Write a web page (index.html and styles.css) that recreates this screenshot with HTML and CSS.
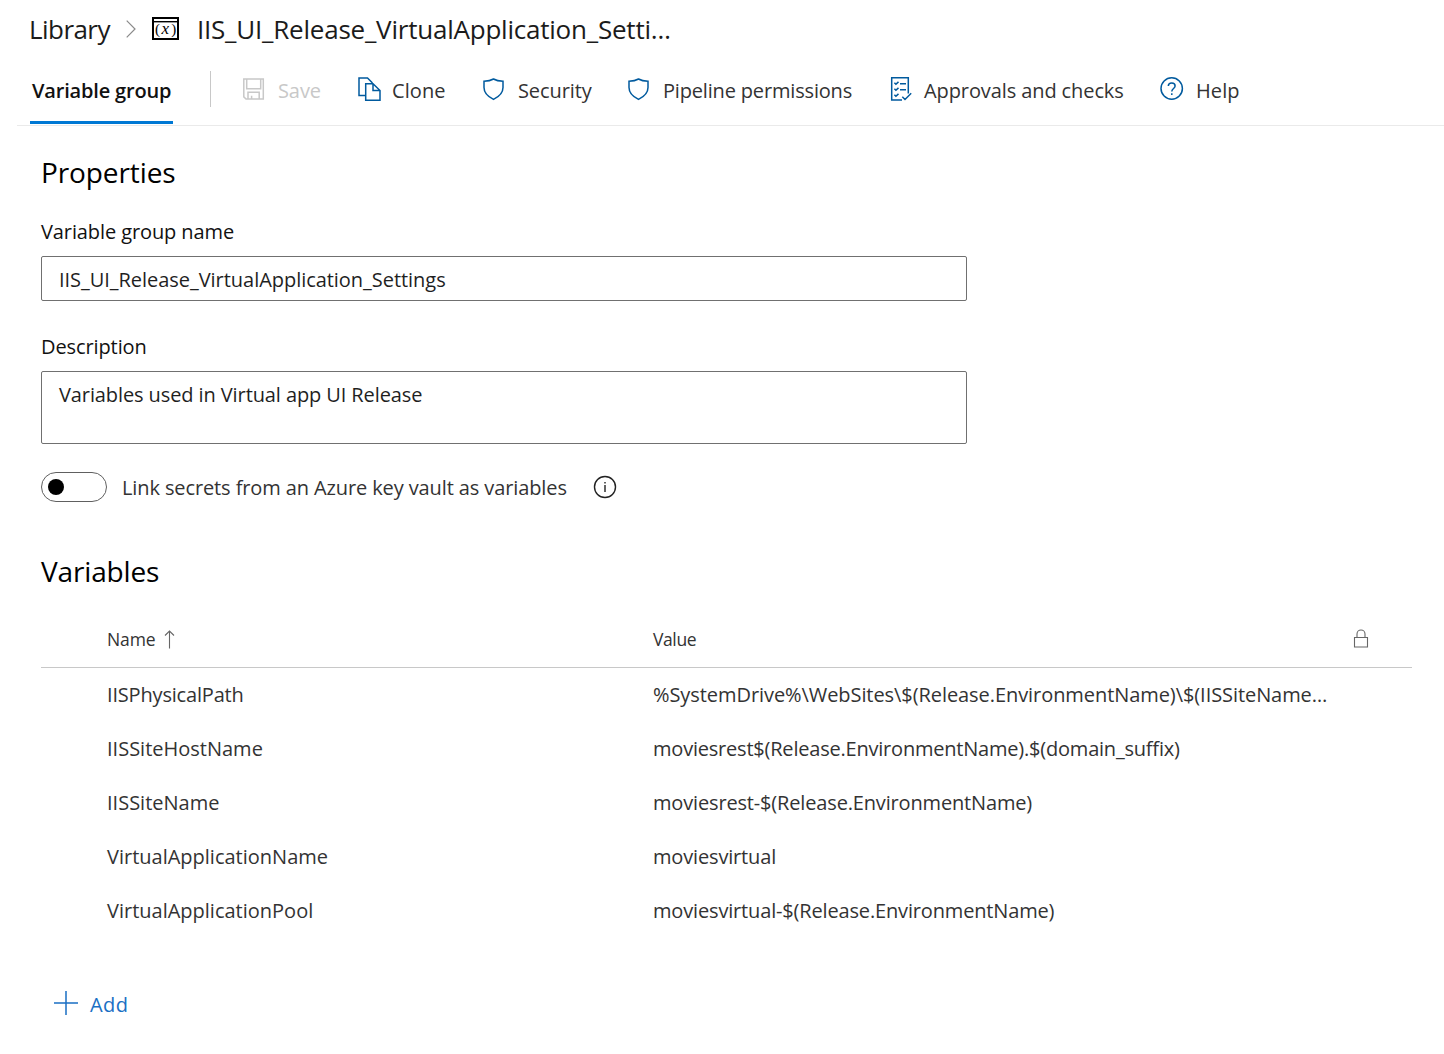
FILE: index.html
```html
<!DOCTYPE html>
<html lang="en">
<head>
<meta charset="utf-8">
<title>Library - Variable group</title>
<link rel="stylesheet" href="styles.css">
</head>
<body>
<header class="breadcrumb">
  <a class="crumb">Library</a>
  <svg class="chevron" width="10" height="18" viewBox="0 0 10 18"><path d="M.7.7 9 9 .7 17.3"/></svg>
  <svg class="group-icon" width="27" height="23" viewBox="0 0 27 23">
    <path d="M1 1h25v21H1z" stroke-width="2"/><path d="M1 4.7h25" stroke-width="1.4"/>
    <text x="3" y="16.500">(</text><text class="var" x="9.500" y="16.500">x</text><text x="19.200" y="16.500">)</text>
  </svg>
  <h1 class="title">IIS_UI_Release_VirtualApplication_Setti…</h1>
</header>

<nav class="toolbar">
  <a class="tab">Variable group</a>
  <span class="divider"></span>
  <a class="action disabled">
    <svg class="icon" viewBox="0 0 24 24"><path d="M1.8 1H21.3V21H4L1.8 18.9zM4.7 1v9.7h14V1M6 21v-6.7h11.2V21M9.6 21v-3.2"/></svg>
    <span>Save</span>
  </a>
  <a class="action clone">
    <svg class="icon" viewBox="0 0 24 24"><path d="M9.7 17.5H3V0h8.5l5 5M9.7 5.7H17l7 6.8v9.8H9.7zM17 5.7v6.8h7"/></svg>
    <span>Clone</span>
  </a>
  <a class="action">
    <svg class="icon" viewBox="0 0 24 24"><path d="M11.5 1C8.8 2.6 5.5 3.2 2 3.3V9.5C2 15 5.8 18.6 11.5 21.4 17.2 18.6 21 15 21 9.5V3.3C17.5 3.2 14.2 2.6 11.5 1z"/></svg>
    <span>Security</span>
  </a>
  <a class="action permissions">
    <svg class="icon" viewBox="0 0 24 24"><path d="M11.5 1C8.8 2.6 5.5 3.2 2 3.3V9.5C2 15 5.8 18.6 11.5 21.4 17.2 18.6 21 15 21 9.5V3.3C17.5 3.2 14.2 2.6 11.5 1z"/></svg>
    <span>Pipeline permissions</span>
  </a>
  <a class="action approvals">
    <svg class="icon" viewBox="0 0 24 24"><path d="M13 22H2.7V-.3H19.3V15.5M13.300 18.800l2.700 2.700 6.200-6.200M5.400 4.800l1.500 1.500L9.500 3.900M5.400 10.800l1.500 1.500 2.600-2.400M5.400 16.800l1.500 1.500 2.600-2.400M11 5.700h6M11 11.700h6"/></svg>
    <span>Approvals and checks</span>
  </a>
  <a class="action help">
    <svg class="icon" viewBox="0 0 24 24"><circle cx="11.7" cy="10.5" r="10.7"/><path d="M8.300 8C8.400 6 9.900 5 11.700 5c2 0 3.400 1.100 3.400 2.900 0 2.500-3.300 2.800-3.300 5.600M11.800 15.300v1.600"/></svg>
    <span>Help</span>
  </a>
</nav>

<main class="content">
  <h2 class="section">Properties</h2>
  <label class="label">Variable group name</label>
  <div class="field">IIS_UI_Release_VirtualApplication_Settings</div>
  <label class="label second">Description</label>
  <div class="field area">Variables used in Virtual app UI Release</div>
  <div class="toggle-row">
    <span class="toggle"><span class="knob"></span></span>
    <span class="toggle-label">Link secrets from an Azure key vault as variables</span>
    <svg class="info" width="24" height="24" viewBox="0 0 24 24"><circle cx="12" cy="12" r="10.5"/><path d="M12 10v7M12 7v1.5"/></svg>
  </div>

  <h2 class="section variables">Variables</h2>
  <section class="table">
    <div class="row head">
      <span class="name">Name
        <svg class="sort" width="11" height="19" viewBox="0 0 11 19"><path d="M5.5 18.5V1M1 5.5 5.5 1 10 5.5"/></svg>
      </span>
      <span class="head-value">Value</span>
      <svg class="lock" width="14" height="19" viewBox="0 0 14 19"><path d="M.5 8.5h13v9.500H.5zM3 8.500V5a4 4 0 0 1 8 0v3.500"/></svg>
    </div>
    <div class="row"><span class="name path">IISPhysicalPath</span><span class="long">%SystemDrive%\WebSites\$(Release.EnvironmentName)\$(IISSiteName…</span></div>
    <div class="row"><span class="name">IISSiteHostName</span><span class="value host">moviesrest$(Release.EnvironmentName).$(domain_suffix)</span></div>
    <div class="row"><span class="name">IISSiteName</span><span class="value">moviesrest-$(Release.EnvironmentName)</span></div>
    <div class="row"><span class="name">VirtualApplicationName</span><span class="value">moviesvirtual</span></div>
    <div class="row"><span class="name">VirtualApplicationPool</span><span class="value">moviesvirtual-$(Release.EnvironmentName)</span></div>
  </section>
  <a class="add">
    <svg class="plus" width="24" height="24" viewBox="0 0 24 24"><path d="M12 0v24M0 12h24"/></svg>
    <span>Add</span>
  </a>
</main>
</body>
</html>
```

FILE: styles.css
```css
* { box-sizing: border-box; }
body {
  margin: 0;
  background: #fff;
  color: #333;
  font: 20px/28px "Open Sans", sans-serif;
  white-space: nowrap;
}
h1, h2 { margin: 0; font-weight: 400; }
svg { display: block; flex: none; overflow: visible; fill: none; }

.breadcrumb {
  display: flex;
  align-items: center;
  height: 56px;
  padding: 2px 0 0 29px;
  font-size: 26px;
  color: #1b1b1b;
}
.crumb { width: 97px; letter-spacing: -.55px; }
.chevron { stroke: #8a8a8a; stroke-width: 1.2; }
.group-icon { margin-left: 16px; margin-bottom: 2px; stroke: #000; }
.group-icon text { font: 15px "Liberation Serif", serif; fill: #000; stroke: none; }
.group-icon .var { font-size: 17px; font-style: italic; }
.title { margin-left: 18px; font-size: 26px; letter-spacing: -.22px; }

.toolbar {
  display: grid;
  grid-template-columns: 143px 69px 114px 126px 145px 262px 271px auto;
  height: 70px;
  margin-left: 17px;
  padding-left: 13px;
  border-bottom: 1px solid #eaeaea;
}
.tab {
  height: 68px;
  padding: 21px 0 0 2px;
  border-bottom: 3px solid #0078d4;
  color: #111;
  font-weight: 600;
  letter-spacing: -.17px;
}
.divider { width: 1px; height: 36px; margin: 15px 0 0 37px; background: #c8c8c8; }
.action { display: flex; align-items: center; gap: 12px; height: 68px; letter-spacing: -.1px; }
.action span { padding-top: 2px; }
.clone, .help { letter-spacing: .1px; }
.permissions { letter-spacing: -.17px; }
.approvals { gap: 11px; }
.icon { width: 24px; height: 24px; stroke: #005a9e; stroke-width: 1.5; }
.disabled { color: #c8c8c8; }
.disabled .icon { stroke: #c8c8c8; }

.content { padding: 26px 32px 0 41px; }
.section { font-size: 28px; line-height: 40px; color: #000; letter-spacing: -.1px; }
.label { display: block; margin-top: 26px; color: #111; letter-spacing: -.1px; }
.label.second { margin-top: 32px; }
.field {
  width: 926px;
  height: 45px;
  margin-top: 10px;
  padding: 9px 17px;
  border: 1px solid #707070;
  border-radius: 2px;
  color: #1f1f1f;
  letter-spacing: -.04px;
}
.area { height: 73px; letter-spacing: -.1px; }
.toggle-row { display: flex; align-items: center; margin-top: 28px; }
.toggle {
  display: flex;
  align-items: center;
  width: 66px;
  height: 30px;
  padding-left: 6px;
  border: 1px solid #606060;
  border-radius: 15px;
}
.knob { width: 16px; height: 16px; border-radius: 50%; background: #000; }
.toggle-label { width: 471px; margin-left: 15px; padding-top: 2px; letter-spacing: -.11px; }
.info { stroke: #222; stroke-width: 1.4; }

.variables { margin-top: 49px; letter-spacing: -.15px; }
.table { margin-top: 20px; }
.row {
  display: grid;
  grid-template-columns: 546px 701px 1fr;
  align-items: center;
  height: 54px;
  padding: 0 0 1px 66px;
}
.head {
  height: 57px;
  padding-bottom: 0;
  border-bottom: 1px solid #c8c8c8;
  font-size: 17.5px;
}
.head .name { display: flex; align-items: center; gap: 8px; letter-spacing: -.1px; }
.path { letter-spacing: -.18px; }
.head-value { letter-spacing: -.4px; }
.sort { stroke: #666; stroke-width: 1.1; }
.lock { margin-bottom: 1px; stroke: #666; stroke-width: 1.1; }
.long { letter-spacing: -.07px; }
.value { letter-spacing: -.16px; }
.host { letter-spacing: -.21px; }

.add {
  display: flex;
  align-items: center;
  gap: 12px;
  height: 30px;
  margin: 51px 0 0 13px;
  color: #1a6fc4;
  letter-spacing: .4px;
}
.add span { padding-top: 2px; }
.plus { margin-bottom: 2px; stroke: #1a6fc4; stroke-width: 1.5; }
```
